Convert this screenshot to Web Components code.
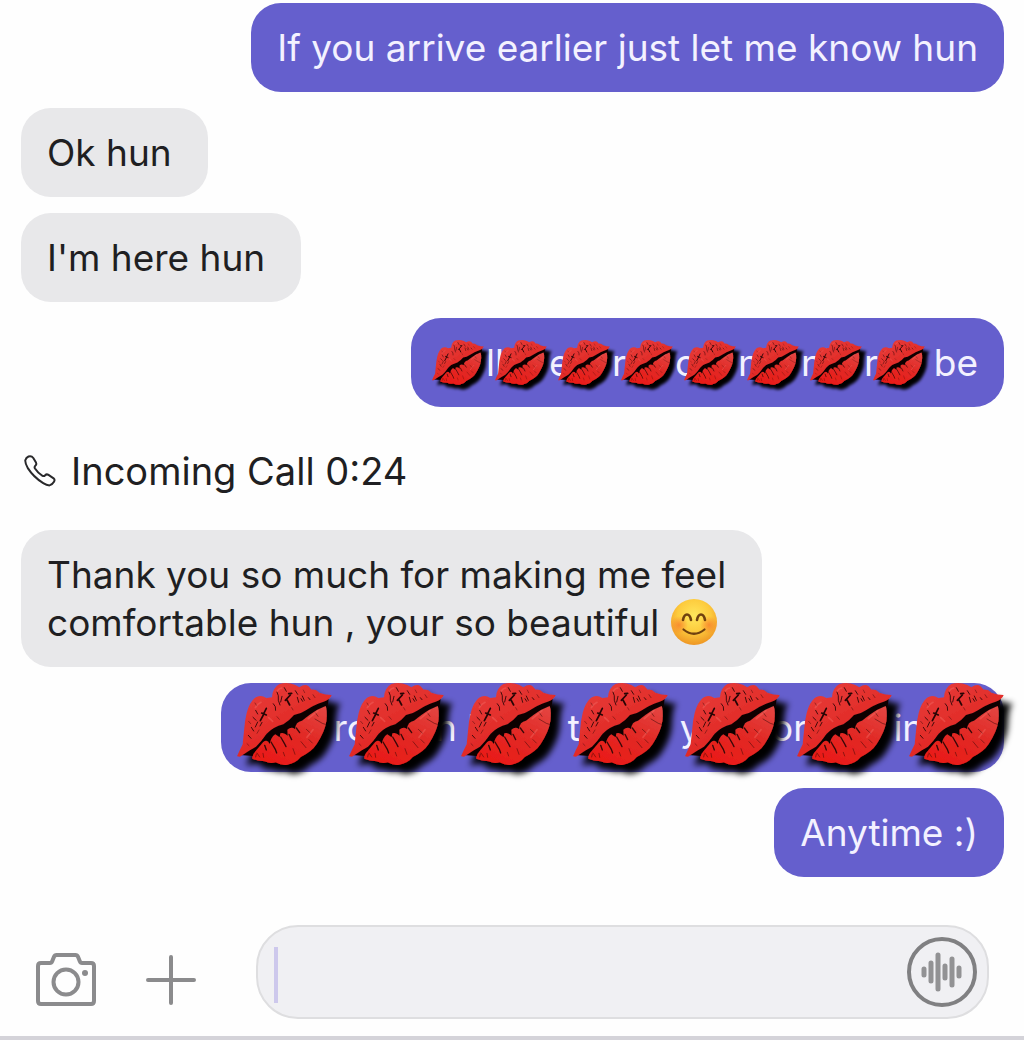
<!DOCTYPE html>
<html lang="en">
<head>
<meta charset="utf-8">
<meta name="viewport" content="width=device-width, initial-scale=1">
<title>Chat</title>
<style>
  body {
    margin: 0;
    background: #fefefe;
    color: #1f1f22;
    font: 400 37px/48px Inter, "Liberation Sans", sans-serif;
  }
</style>
</head>
<body>
<chat-thread>
  <chat-bubble out>If you arrive earlier just let me know hun</chat-bubble>
  <chat-bubble>Ok hun</chat-bubble>
  <chat-bubble>I'm here hun</chat-bubble>
  <chat-bubble out stickers="small">
    <lip-sticker>ll</lip-sticker>
    <lip-sticker>e</lip-sticker>
    <lip-sticker>r</lip-sticker>
    <lip-sticker>o</lip-sticker>
    <lip-sticker>n</lip-sticker>
    <lip-sticker>ni</lip-sticker>
    <lip-sticker>r</lip-sticker>
    <lip-sticker>&thinsp;be</lip-sticker>
  </chat-bubble>
  <call-entry>Incoming Call 0:24</call-entry>
  <chat-bubble>Thank you so much for making me feel<br>comfortable hun , your so beautiful <smile-emoji></smile-emoji></chat-bubble>
  <chat-bubble out stickers="large">
    <lip-sticker>&nbsp;ro</lip-sticker>
    <lip-sticker>n l</lip-sticker>
    <lip-sticker>&nbsp;&nbsp;t</lip-sticker>
    <lip-sticker>&nbsp;&nbsp;y</lip-sticker>
    <lip-sticker>or</lip-sticker>
    <lip-sticker>&nbsp;in</lip-sticker>
    <lip-sticker></lip-sticker>
  </chat-bubble>
  <chat-bubble out>Anytime :)</chat-bubble>
</chat-thread>
<chat-composer></chat-composer>

<script>
class ChatThread extends HTMLElement {
  constructor() {
    super()
    this.attachShadow({ mode: 'open' })
    this.shadowRoot.innerHTML = `
      <style>
        :host {
          display: flex;
          flex-direction: column;
          align-items: flex-start;
          gap: 16px;
          padding: 3px 20px 0 21px;
        }
      </style>
      <slot></slot>
    `
  }
}

// Attributes: out (sent by the user), stickers="small|large" (row of stickers)
class ChatBubble extends HTMLElement {
  constructor() {
    super()
    this.attachShadow({ mode: 'open' })
    this.shadowRoot.innerHTML = `
      <style>
        :host {
          display: block;
          box-sizing: border-box;
          padding: 21px 36px 20px 26px;
          border-radius: 30px;
          background: #e8e8ea;
        }
        :host([out]) {
          align-self: flex-end;
          padding-right: 26px;
          background: #655fcd;
          color: #f3f1ff;
        }
        :host([stickers]) {
          --lip-width: 52px;
          --lip-step: 63px;
          --lip-text: 54px;
          display: flex;
          align-items: center;
          padding: 0 26px 0 21px;
        }
        :host([stickers="large"]) {
          --lip-width: 95px;
          --lip-step: 112px;
          --lip-text: 86px;
          --lip-align: start;
          padding: 0 0 0 16px;
        }
      </style>
      <slot></slot>
    `
  }
}

// A lipstick kiss lying over the text that follows it
class LipSticker extends HTMLElement {
  constructor() {
    super()
    this.attachShadow({ mode: 'open' })
    this.shadowRoot.innerHTML = `
      <style>
        :host {
          display: grid;
          align-items: center;
          width: var(--lip-step);
          height: 89px;
        }
        :host(:last-child) { width: auto; }
        span, svg { grid-area: 1 / 1; }
        span { padding-left: var(--lip-text); white-space: nowrap; }
        span.empty { display: none; }
        svg {
          position: relative;
          z-index: 1;
          display: block;
          align-self: var(--lip-align, center);
          width: var(--lip-width);
          overflow: visible;
        }
      </style>
      <span><slot></slot></span>
      <svg viewBox="75 36 285 248" aria-hidden="true">
        <defs>
          <filter id="shade" x="-20%" y="-20%" width="150%" height="150%">
            <feDropShadow dx="27" dy="26" stdDeviation="9" flood-color="#000" flood-opacity="1"/>
          </filter>
          <linearGradient id="upper" x1="0" y1="0" x2="0.7" y2="1">
            <stop offset="0" stop-color="#e8403d"/>
            <stop offset="1" stop-color="#de1f1c"/>
          </linearGradient>
          <linearGradient id="lower" x1="1" y1="0" x2="0.4" y2="1">
            <stop offset="0" stop-color="#e44743"/>
            <stop offset="0.5" stop-color="#e12a26"/>
            <stop offset="1" stop-color="#e91d19"/>
          </linearGradient>
        </defs>
        <g filter="url(#shade)">
          <path fill="#100304" d="M84 252L150 195 240 128 350 82 342 145 305 220 250 265 170 268 122 255Z"/>
          <path fill="url(#upper)" d="M75 256Q83 238 92 220Q94 200 96 180Q98 150 104 126Q112 94 129 80Q146 70 163 81L180 79Q181 51 202 39Q226 31 250 42L262 49Q278 38 289 45L299 56Q312 54 322 65Q340 72 359 72Q355 85 335 92Q304 102 282 118Q266 129 246 132Q232 149 214 160Q184 168 164 188Q149 210 132 227Q108 240 84 257Z"/>
          <path fill="url(#lower)" d="M341 105Q347 115 343 151Q338 183 314 219Q300 241 266 258Q252 276 226 281Q210 284 191 274Q175 280 158 271Q137 270 121 263Q119 252 131 240L153 214Q166 203 173 219Q177 198 190 190L203 199L205 187Q216 183 227 194L226 176Q238 165 249 174Q251 152 270 149Q296 128 316 116Z"/>
        </g>
        <g fill="none" stroke="#260505" stroke-linecap="round">
          <path stroke-width="5" d="M235 72L220 88M230 68L239 67M225 87L233 102M163 112L154 130M149 126L163 132M154 132L145 149"/>
          <path stroke-width="3" opacity=".85" d="M195 63Q201 73 199 88L204 102M210 76L206 93M250 59L257 70M256 79L260 94M271 75L277 88M267 83L272 91M289 80L294 86M184 98Q193 106 191 118M131 118L137 129M123 139L132 148M137 153L130 168M118 169L125 180M150 154L144 165M109 193L117 202M217 50L223 61"/>
          <path stroke-width="2" opacity=".6" d="M110 151L116 158M129 96L134 104M195 137L202 145M239 110L243 117M303 71L309 80M274 57L278 65M141 177L135 187M105 218L111 224"/>
          <path stroke-width="4" opacity=".9" d="M177 213L190 235L194 246M206 198L217 217L222 227M231 190L239 206M253 171L263 185M158 223L163 237"/>
          <path stroke-width="2" opacity=".7" d="M309 144L331 157L340 160M283 175L296 187M267 212L282 230M243 233L249 250M214 244L218 255M153 247L155 259M291 206L301 216M310 125L318 136M135 246L143 258M133 249L131 258"/>
        </g>
        <g fill="none" stroke="#f4706a" stroke-linecap="round" stroke-width="5" opacity=".4">
          <path d="M147 94Q135 100 130 110M209 51Q201 52 196 60M289 143L318 119M285 199L303 176M170 140L182 151"/>
        </g>
      </svg>
    `
  }

  connectedCallback() {
    if (!this.textContent) this.shadowRoot.querySelector('span').classList.add('empty')
  }
}

class CallEntry extends HTMLElement {
  constructor() {
    super()
    this.attachShadow({ mode: 'open' })
    this.shadowRoot.innerHTML = `
      <style>
        :host {
          display: flex;
          align-items: center;
          gap: 15px;
          height: 91px;
          padding: 4px 0 0 3px;
          box-sizing: border-box;
          font-size: 38px;
        }
        svg { width: 32px; height: 32px; }
      </style>
      <svg viewBox="0 0 32 32" fill="none" stroke="#29292b" stroke-width="2" stroke-linejoin="round" aria-hidden="true">
        <path d="M4.500 1.500Q7.500 .5 9.300 3L12 7.500Q12.800 9.500 11.500 10.500Q10 11.800 11 13.500Q14 18.200 18.500 20.800Q20 21.500 21.200 20.200Q22.600 18.700 24.500 19.900L29.600 23.300Q31.200 24.700 30 26.800Q28.300 29.700 25.500 30.400Q22.600 30.400 19.200 28.200Q9.300 21.800 4 13.400Q1 8.300 1.300 5.300Q2 2.500 4.500 1.500Z"/>
      </svg>
      <slot></slot>
    `
  }
}

class SmileEmoji extends HTMLElement {
  constructor() {
    super()
    this.attachShadow({ mode: 'open' })
    this.shadowRoot.innerHTML = `
      <style>
        :host { display: inline-block; height: 48px; vertical-align: top; }
        svg { display: block; width: 48px; height: 48px; }
      </style>
      <svg viewBox="0 0 48 48" role="img" aria-label="Smiling face">
        <defs>
          <radialGradient id="face" cx=".5" cy=".36" r=".65">
            <stop offset="0" stop-color="#ffe65c"/>
            <stop offset=".55" stop-color="#fdcb3d"/>
            <stop offset="1" stop-color="#ee9423"/>
          </radialGradient>
          <radialGradient id="cheek">
            <stop offset="0" stop-color="#f77a2b" stop-opacity=".75"/>
            <stop offset="1" stop-color="#f77a2b" stop-opacity="0"/>
          </radialGradient>
        </defs>
        <circle cx="24" cy="23" r="23" fill="url(#face)"/>
        <circle cx="9" cy="26" r="9" fill="url(#cheek)"/>
        <circle cx="39" cy="26" r="9" fill="url(#cheek)"/>
        <g fill="none" stroke="#70410f" stroke-linecap="round">
          <path stroke-width="2.6" d="M13 21Q14 15.500 17 15.500T21 21M27 21Q28 15.500 31 15.500T35 21"/>
          <path stroke-width="2.200" d="M13.500 30.500Q24 39 34.500 30.500"/>
        </g>
      </svg>
    `
  }
}

class ChatComposer extends HTMLElement {
  constructor() {
    super()
    this.attachShadow({ mode: 'open' })
    this.shadowRoot.innerHTML = `
      <style>
        * { box-sizing: border-box; }
        :host {
          display: flex;
          align-items: center;
          padding: 48px 35px 17px 36px;
          border-bottom: 4px solid #d4d3d9;
        }
        button {
          padding: 0;
          border: 0;
          background: none;
          color: #8b8b8d;
          cursor: pointer;
        }
        svg { display: block; }
        .tools { display: flex; align-items: center; gap: 50px; padding-top: 16px; }
        .field {
          flex: 1;
          display: flex;
          align-items: center;
          min-width: 0;
          height: 94px;
          margin-left: 60px;
          padding: 0 10px 0 16px;
          border: 2px solid #dedee0;
          border-radius: 42px;
          background: #f0f0f3;
        }
        .caret { width: 4px; height: 56px; margin-top: 6px; background: #cdc8ec; }
        input {
          flex: 1;
          min-width: 0;
          height: 60px;
          padding: 0 8px;
          border: 0;
          outline: 0;
          background: none;
          color: inherit;
          font: inherit;
        }
        .voice { color: #808082; }
      </style>
      <div class="tools">
        <button type="button" aria-label="Camera">
          <svg width="60" height="54" viewBox="0 0 60 54" fill="none" stroke="currentColor" stroke-width="4" stroke-linejoin="round">
            <path d="M5 10H14Q15.500 10 16.300 8L18 3.700Q18.700 2 20.500 2H39.500Q41.300 2 42 3.700L43.700 8Q44.500 10 46 10H55Q58 10 58 13V48Q58 51 55 51H5Q2 51 2 48V13Q2 10 5 10Z"/>
            <circle cx="30" cy="29" r="12.500"/>
            <circle cx="49" cy="20" r="3" fill="currentColor" stroke="none"/>
          </svg>
        </button>
        <button type="button" aria-label="Add">
          <svg width="50" height="50" viewBox="0 0 50 50" fill="none" stroke="currentColor" stroke-width="4" stroke-linecap="round">
            <path d="M25 2V48M2 25H48"/>
          </svg>
        </button>
      </div>
      <div class="field">
        <span class="caret"></span>
        <input type="text" aria-label="Message">
        <button class="voice" type="button" aria-label="Voice message">
          <svg width="70" height="70" viewBox="0 0 70 70" fill="none" stroke="currentColor" stroke-width="4" stroke-linecap="round">
            <circle cx="35" cy="35" r="33"/>
            <path stroke="#929294" stroke-width="5" d="M17 32V38M24 26V44M31 18V52M38 29V41M45 22V48M52 31V39"/>
          </svg>
        </button>
      </div>
    `
  }
}

customElements.define('chat-thread', ChatThread)
customElements.define('chat-bubble', ChatBubble)
customElements.define('lip-sticker', LipSticker)
customElements.define('call-entry', CallEntry)
customElements.define('smile-emoji', SmileEmoji)
customElements.define('chat-composer', ChatComposer)
</script>
</body>
</html>
